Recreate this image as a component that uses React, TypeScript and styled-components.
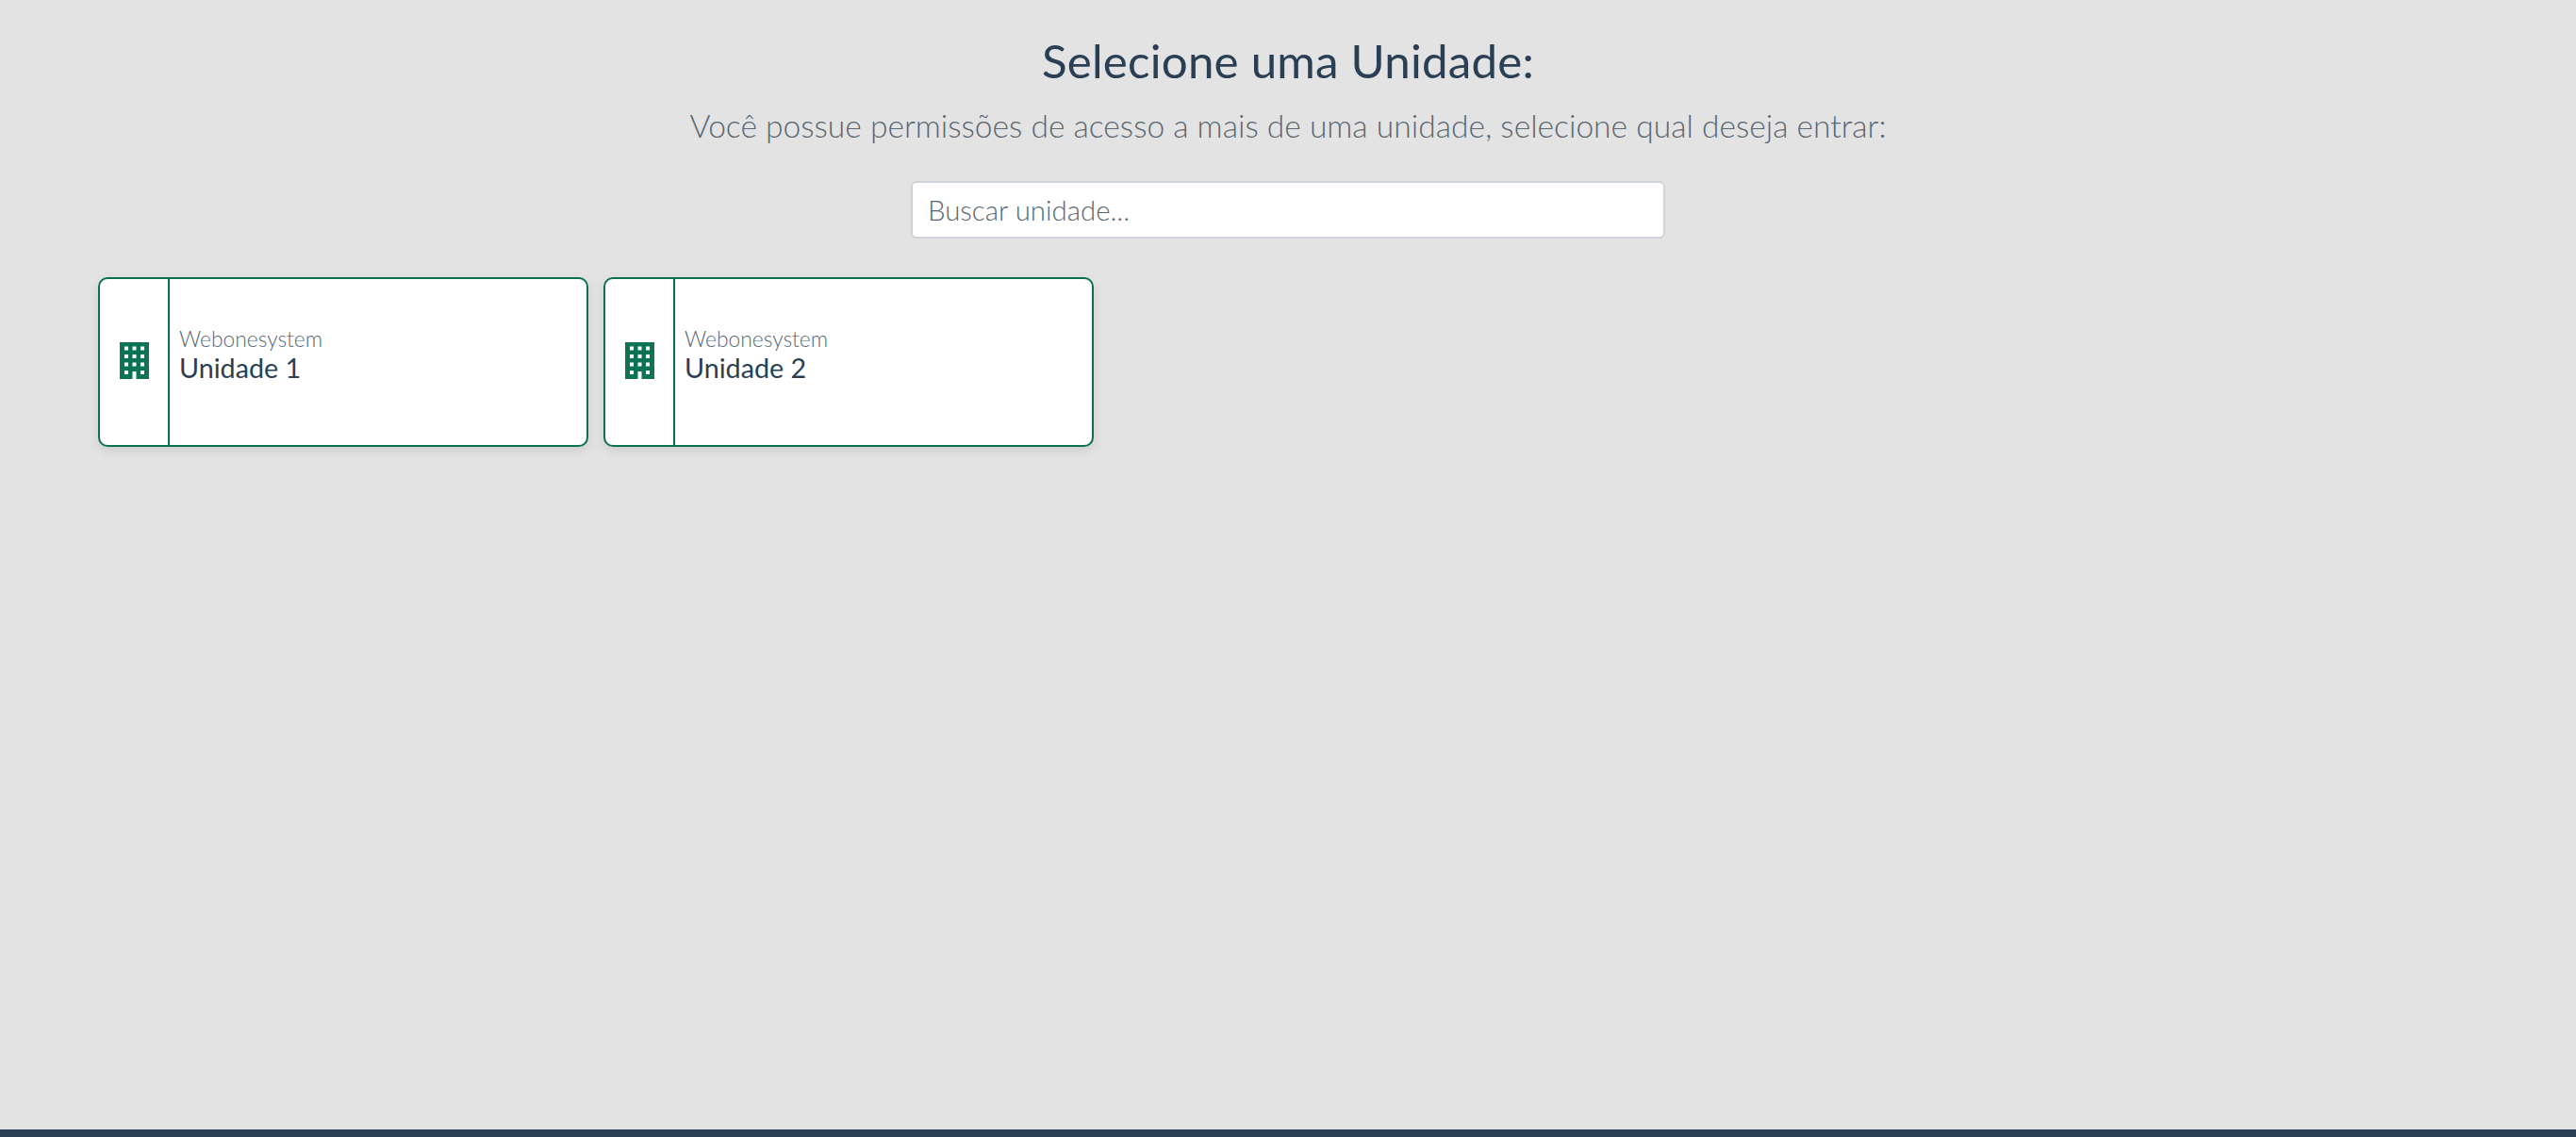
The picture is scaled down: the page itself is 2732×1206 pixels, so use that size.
import React from "react";
import styled, { createGlobalStyle } from "styled-components";

const Global = createGlobalStyle`
  html, body { margin: 0; padding: 0; background: #e3e3e3; }
  * { box-sizing: border-box; }
  body { font-family: "Lato", "Noto Sans", sans-serif; }
`;

const Page = styled.div`
  min-height: 100vh;
  display: flex;
  flex-direction: column;
  background: #e3e3e3;
`;

const Main = styled.main`
  flex: 1;
  display: flex;
  flex-direction: column;
  align-items: center;
  padding: 37px 104px 0;
`;

const Title = styled.h1`
  margin: 0;
  font-size: 49.3px;
  line-height: 54px;
  font-weight: 400;
  color: #2a3f54;
  letter-spacing: 0.2px;
`;

const Subtitle = styled.p`
  margin: 23px 0 0;
  font-size: 33.6px;
  line-height: 38px;
  font-weight: 300;
  color: #5a6772;
`;

const Search = styled.input`
  display: block;
  width: 800px;
  height: 61px;
  margin-top: 40px;
  padding: 0 16px;
  font-family: inherit;
  font-size: 29.4px;
  font-weight: 300;
  color: #2a3f54;
  background: #fff;
  border: 2px solid #ced4da;
  border-radius: 6px;
  outline: none;
  &::placeholder { color: #5a6772; opacity: 1; }
`;

const Grid = styled.div`
  align-self: stretch;
  display: flex;
  gap: 16px;
  margin-top: 41px;
`;

const Card = styled.div`
  width: 520px;
  height: 180px;
  display: flex;
  background: #fff;
  border: 2px solid #0b6f51;
  border-radius: 10px;
  box-shadow: 0 4px 12px rgba(0, 0, 0, 0.1);
`;

const IconCell = styled.div`
  flex: 0 0 74px;
  display: flex;
  align-items: center;
  justify-content: center;
  border-right: 2px solid #0b6f51;
  padding-bottom: 3px;
`;

const Info = styled.div`
  flex: 1;
  display: flex;
  flex-direction: column;
  justify-content: center;
  padding: 0 10px 17px;
`;

const Company = styled.span`
  font-size: 22.8px;
  line-height: 28px;
  font-weight: 300;
  color: #5a6772;
`;

const UnitName = styled.span`
  font-size: 28.7px;
  line-height: 34px;
  font-weight: 400;
  color: #2a3f54;
`;

const Footer = styled.footer`
  height: 8px;
  background: #2a3f54;
`;

const BuildingIcon = () => (
  <svg width="31" height="39" viewBox="0 0 31 39" aria-hidden="true">
    <path
      fill="#0d7355"
      fillRule="evenodd"
      d="M0 0h31v39H17.500v-8h-4v8H0z M5 4.500v4h4v-4z M13.500 4.500v4h4v-4z M22 4.500v4h4v-4z M5 13v4h4v-4z M13.500 13v4h4v-4z M22 13v4h4v-4z M5 21.500v4h4v-4z M13.500 21.500v4h4v-4z M22 21.500v4h4v-4z M5 30v4h4v-4z M22 30v4h4v-4z"
    />
  </svg>
);

const units = ["Unidade 1", "Unidade 2"];

export default function App() {
  return (
    <Page>
      <Global />
      <Main>
        <Title>Selecione uma Unidade:</Title>
        <Subtitle>Você possue permissões de acesso a mais de uma unidade, selecione qual deseja entrar:</Subtitle>
        <Search placeholder="Buscar unidade..." />
        <Grid>
          {units.map((u) => (
            <Card key={u}>
              <IconCell>
                <BuildingIcon />
              </IconCell>
              <Info>
                <Company>Webonesystem</Company>
                <UnitName>{u}</UnitName>
              </Info>
            </Card>
          ))}
        </Grid>
      </Main>
      <Footer />
    </Page>
  );
}
